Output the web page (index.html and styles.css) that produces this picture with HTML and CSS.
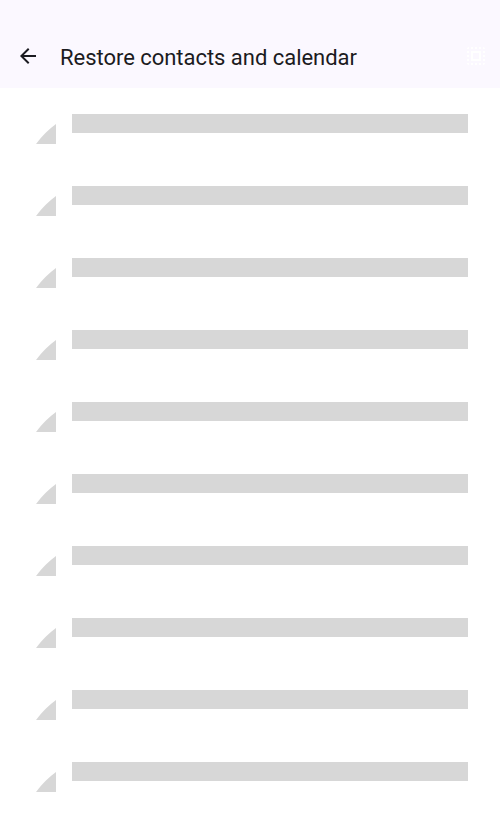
FILE: index.html
```html
<!DOCTYPE html>
<html lang="en">
<head>
<meta charset="utf-8">
<title>Restore contacts and calendar</title>
<link rel="stylesheet" href="styles.css">
</head>
<body>
<header class="app-bar">
  <svg class="icon back" viewBox="0 0 24 24"><path d="M20 11H7.83l5.59-5.59L12 4l-8 8 8 8 1.41-1.41L7.83 13H20z"/></svg>
  <h1 class="title">Restore contacts and calendar</h1>
  <svg class="icon select-all" viewBox="0 0 24 24"><path d="M3 5h2V3c-1.100 0-2 .9-2 2zm0 8h2v-2H3v2zm4 8h2v-2H7v2zM3 9h2V7H3v2zm10-6h-2v2h2V3zm6 0v2h2c0-1.100-.9-2-2-2zM5 21v-2H3c0 1.100.9 2 2 2zm-2-4h2v-2H3v2zM9 3H7v2h2V3zm2 18h2v-2h-2v2zm8-8h2v-2h-2v2zm0 8c1.100 0 2-.9 2-2h-2v2zm0-12h2V7h-2v2zm0 8h2v-2h-2v2zm-4 4h2v-2h-2v2zm0-16h2V3h-2v2zM7 17h10V7H7v10zm2-8h6v6H9V9z"/></svg>
</header>
<main class="list">
  <div class="row"><svg class="wedge" viewBox="0 0 20 20"><path d="M0 20A90 90 0 0 1 20 0V20z"/></svg><div class="bar"></div></div>
  <div class="row"><svg class="wedge" viewBox="0 0 20 20"><path d="M0 20A90 90 0 0 1 20 0V20z"/></svg><div class="bar"></div></div>
  <div class="row"><svg class="wedge" viewBox="0 0 20 20"><path d="M0 20A90 90 0 0 1 20 0V20z"/></svg><div class="bar"></div></div>
  <div class="row"><svg class="wedge" viewBox="0 0 20 20"><path d="M0 20A90 90 0 0 1 20 0V20z"/></svg><div class="bar"></div></div>
  <div class="row"><svg class="wedge" viewBox="0 0 20 20"><path d="M0 20A90 90 0 0 1 20 0V20z"/></svg><div class="bar"></div></div>
  <div class="row"><svg class="wedge" viewBox="0 0 20 20"><path d="M0 20A90 90 0 0 1 20 0V20z"/></svg><div class="bar"></div></div>
  <div class="row"><svg class="wedge" viewBox="0 0 20 20"><path d="M0 20A90 90 0 0 1 20 0V20z"/></svg><div class="bar"></div></div>
  <div class="row"><svg class="wedge" viewBox="0 0 20 20"><path d="M0 20A90 90 0 0 1 20 0V20z"/></svg><div class="bar"></div></div>
  <div class="row"><svg class="wedge" viewBox="0 0 20 20"><path d="M0 20A90 90 0 0 1 20 0V20z"/></svg><div class="bar"></div></div>
  <div class="row"><svg class="wedge" viewBox="0 0 20 20"><path d="M0 20A90 90 0 0 1 20 0V20z"/></svg><div class="bar"></div></div>
</main>
</body>
</html>
```
FILE: styles.css
```css
* { box-sizing: border-box; }

body {
  margin: 0;
  background: #fff;
  font-family: Roboto, sans-serif;
}

.app-bar {
  display: flex;
  align-items: center;
  height: 88px;
  padding: 24px 12px 0 16px;
  background: #fbf8ff;
  color: #1b1b21;
}

.icon {
  width: 24px;
  height: 24px;
  flex: none;
}

.back { fill: #1b1b21; }
.select-all { fill: #fff; }

.title {
  flex: 1;
  margin: 0 0 0 20px;
  padding-top: 4px;
  font-size: 22px;
  font-weight: 400;
  line-height: 28px;
  letter-spacing: -0.03px;
}

.list { padding: 10px 32px 0 36px; }

.row {
  display: flex;
  align-items: flex-start;
  gap: 16px;
  height: 72px;
  padding-top: 16px;
}

.wedge {
  width: 20px;
  height: 20px;
  margin-top: 10px;
  fill: #d7d7d7;
}

.bar {
  flex: 1;
  height: 19px;
  background: #d7d7d7;
}
```
